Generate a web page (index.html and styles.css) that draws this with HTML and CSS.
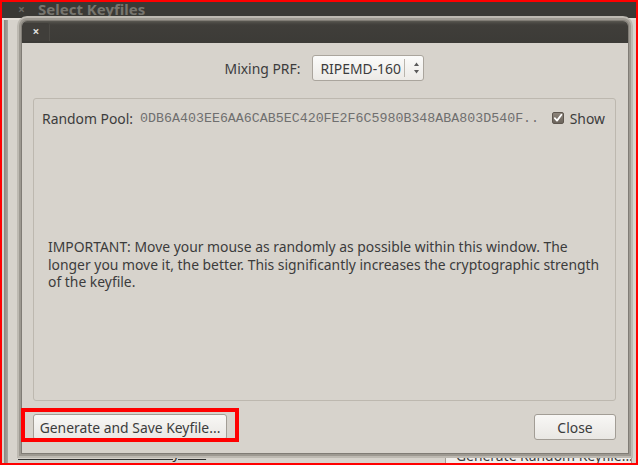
FILE: index.html
```html
<!DOCTYPE html>
<html>
<head>
<meta charset="utf-8">
<link rel="stylesheet" href="styles.css">
</head>
<body>
<div class="screen">
  <div class="bg-window">
    <div class="bg-titlebar">
      <span class="bg-close">×</span>
      <span class="bg-title">Select Keyfiles</span>
    </div>
    <div class="bg-body">
      <div class="bg-strip"></div>
      <div class="bg-bottom">
        <span class="bg-link">More information on keyfiles</span>
        <span class="bg-button">Generate Random Keyfile...</span>
      </div>
    </div>
  </div>

  <div class="dialog">
    <div class="dlg-titlebar">
      <div class="dlg-tab">×</div>
    </div>
    <div class="dlg-body">
      <div class="prf-row">
        <span class="label">Mixing PRF:</span>
        <div class="combo">
          <span class="combo-text">RIPEMD-160</span>
          <span class="combo-sep"></span>
          <span class="combo-arrows">
            <svg width="7" height="14" viewBox="0 0 7 14"><path d="M3.5 1.5 L6 5 L1 5 Z" fill="#5a5a5a"/><path d="M3.5 12.5 L6 9 L1 9 Z" fill="#5a5a5a"/></svg>
          </span>
        </div>
      </div>
      <div class="frame">
        <div class="pool-row">
          <span class="label">Random Pool:</span>
          <span class="hex">0DB6A403EE6AA6CAB5EC420FE2F6C5980B348ABA803D540F..</span>
          <span class="show">
            <span class="checkbox">
              <svg width="12" height="12" viewBox="0 0 12 12"><path d="M2.8 6.2 L5 8.6 L9.4 2.8" fill="none" stroke="#ffffff" stroke-width="1.8" stroke-linecap="round" stroke-linejoin="round"/></svg>
            </span>
            <span class="label">Show</span>
          </span>
        </div>
        <p class="important">IMPORTANT: Move your mouse as randomly as possible within this window. The<br>longer you move it, the better. This significantly increases the cryptographic strength<br>of the keyfile.</p>
      </div>
      <div class="btn-row">
        <span class="btn btn-generate">Generate and Save Keyfile...</span>
        <span class="btn btn-close">Close</span>
      </div>
    </div>
  </div>

  <div class="highlight"></div>
  <div class="outline"></div>
</div>
</body>
</html>
```
FILE: styles.css
```css
html, body {
  margin: 0;
  padding: 0;
  background: #d7d3cc;
}
.screen {
  position: relative;
  width: 638px;
  height: 465px;
  overflow: hidden;
  font-family: "Noto Sans", "Open Sans", sans-serif;
  font-size: 13.9px;
  color: #3c3c3c;
}
.bg-window {
  position: absolute;
  inset: 0;
  display: flex;
  flex-direction: column;
  background: #d7d3cc;
}
.bg-titlebar {
  height: 18px;
  background: #3a3935;
  display: flex;
  align-items: center;
  flex-shrink: 0;
}
.bg-close {
  color: #6b6964;
  font-weight: bold;
  font-size: 12px;
  margin-left: 18px;
  width: 20px;
}
.bg-title {
  color: #77756e;
  font-weight: bold;
  font-size: 15px;
}
.bg-body {
  flex: 1;
  position: relative;
  display: flex;
  flex-direction: column;
  justify-content: flex-end;
  border-top: 2px solid #e4e0d9;
}
.bg-strip {
  position: absolute;
  left: 4px;
  top: 0;
  bottom: 0;
  width: 4px;
  background: linear-gradient(90deg, #8a8680, #a8a49d);
}
.bg-bottom {
  display: flex;
  justify-content: space-between;
  align-items: flex-start;
  height: 14px;
  padding: 0 6px 0 18px;
}
.bg-link {
  text-decoration: underline;
  color: #2e2e2e;
  line-height: 14px;
  margin-top: -5px;
  white-space: nowrap;
}
.bg-button {
  width: 187px;
  height: 20px;
  margin-top: 1px;
  box-sizing: border-box;
  background: #f1efec;
  border: 1px solid #a39e96;
  border-radius: 3px;
  padding-left: 10px;
  line-height: 6px;
  overflow: hidden;
  white-space: nowrap;
}

/* dialog */
.dialog {
  position: absolute;
  left: 22px;
  top: 21px;
  width: 606px;
  height: 432px;
  display: flex;
  flex-direction: column;
  background: #d7d3cc;
  border-radius: 5px 5px 0 0;
  box-shadow: 0 0 0 1px #807c75, 0 0 0 3px #9d9991, 0 0 0 5px #bdb9b1;
}
.dlg-titlebar {
  height: 22px;
  flex-shrink: 0;
  border-radius: 5px 5px 0 0;
  background: linear-gradient(#5a5852 0, #4a4843 2px, #403e3a 4px, #3c3b37 100%);
  display: flex;
  align-items: flex-end;
  padding-left: 1px;
}
.dlg-tab {
  width: 26px;
  height: 18px;
  margin-bottom: 2px;
  background: #403e3a;
  border-right: 1px solid #4c4a45;
  color: #dcdcdc;
  font-weight: bold;
  font-size: 12px;
  line-height: 17px;
  text-align: center;
  border-radius: 2px 2px 0 0;
}
.dlg-body {
  flex: 1;
  display: flex;
  flex-direction: column;
  padding: 12px 12px 0 11px;
}
.prf-row {
  display: flex;
  justify-content: center;
  align-items: center;
  gap: 12px;
  height: 26px;
}
.combo {
  width: 112px;
  height: 26px;
  box-sizing: border-box;
  border: 1px solid #aaa59d;
  border-radius: 3px;
  background: linear-gradient(#fbfbfa, #eceae6);
  display: flex;
  align-items: center;
  padding-left: 7px;
}
.combo-text {
  width: 84px;
}
.combo-sep {
  width: 1px;
  height: 18px;
  background: #b9b5ad;
}
.combo-arrows {
  display: flex;
  margin-left: 8px;
}
.frame {
  margin-top: 17px;
  height: 303px;
  box-sizing: border-box;
  border: 1px solid #bdb8af;
  border-radius: 3px;
  padding: 9px 10px 0 8px;
}
.pool-row {
  display: flex;
  align-items: center;
  height: 20px;
}
.hex {
  font-family: "Liberation Mono", monospace;
  font-size: 13.3px;
  color: #6f6f6f;
  margin-left: 7px;
}
.show {
  margin-left: auto;
  display: flex;
  align-items: center;
  gap: 6px;
}
.checkbox {
  width: 12px;
  height: 12px;
  box-sizing: border-box;
  border: 1px solid #5e574f;
  border-radius: 2px;
  background: linear-gradient(#8c847a, #6c655c);
  display: flex;
}
.checkbox svg {
  margin: -1px;
}
.important {
  margin: 110px 0 0 6px;
  line-height: 17.5px;
}
.btn-row {
  display: flex;
  justify-content: space-between;
  margin-top: 13px;
}
.btn {
  height: 26px;
  box-sizing: border-box;
  border: 1px solid #a29d95;
  border-radius: 3px;
  background: linear-gradient(#f8f7f5, #e9e7e3);
  display: flex;
  align-items: center;
  justify-content: center;
}
.btn-generate {
  width: 194px;
}
.btn-close {
  width: 82px;
}
.highlight {
  position: absolute;
  left: 21px;
  top: 408px;
  width: 218px;
  height: 34px;
  box-sizing: border-box;
  border: 4px solid #ff0000;
}
.outline {
  position: absolute;
  inset: 0;
  border: 2px solid #ff0000;
  pointer-events: none;
}
```
